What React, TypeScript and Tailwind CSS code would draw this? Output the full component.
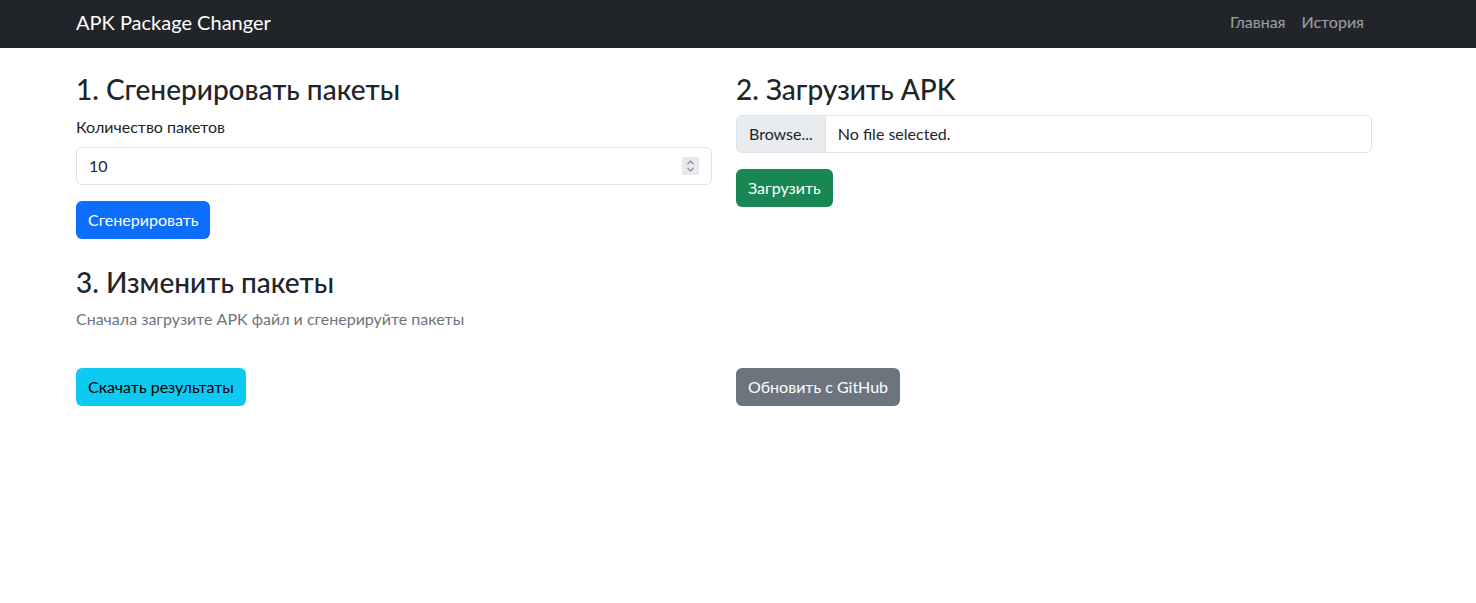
import React from 'react';

const fontStack = 'Lato, "Open Sans", sans-serif';

function NumberSpinner() {
  return (
    <span className="absolute right-[13px] top-1/2 -translate-y-1/2 w-[17px] h-[18px] bg-[#e9e9ed] flex flex-col items-center justify-center">
      <svg width="9" height="14" viewBox="0 0 9 14" fill="none" stroke="#8a8a8e" strokeWidth="1.2">
        <path d="M1.5 5 L4.5 2 L7.5 5" />
        <path d="M1.5 9 L4.5 12 L7.5 9" />
      </svg>
    </span>
  );
}

export default function App() {
  return (
    <div className="min-h-screen bg-white text-[#212529]" style={{ fontFamily: fontStack }}>
      {/* Navbar */}
      <nav className="bg-[#212529] h-12">
        <div className="w-[1320px] ml-[64px] px-3 pb-[4px] h-full flex items-center justify-between">
          <a className="text-white text-[20px] leading-[30px]">APK Package Changer</a>
          <div className="flex items-center text-[16px] leading-6">
            <a className="px-2 text-white/55">Главная</a>
            <a className="px-2 text-white/55">История</a>
          </div>
        </div>
      </nav>

      <main className="w-[1320px] ml-[64px] px-3 pt-[25px]">
        <div className="grid grid-cols-2 gap-x-6">
          {/* Generate */}
          <div>
            <h3 className="text-[28px] leading-[1.2] font-medium mb-2">1. Сгенерировать пакеты</h3>
            <label className="block text-[16px] leading-6 mb-2">Количество пакетов</label>
            <div className="relative mb-4">
              <input
                type="text"
                defaultValue="10"
                className="w-full h-[38px] border border-[#dee2e6] rounded-md px-3 text-[16px] leading-6 outline-none"
              />
              <NumberSpinner />
            </div>
            <button className="h-[38px] px-3 rounded-md bg-[#0d6efd] text-white text-[16px] leading-6">
              Сгенерировать
            </button>
          </div>

          {/* Upload */}
          <div>
            <h3 className="text-[28px] leading-[1.2] font-medium mb-2">2. Загрузить APK</h3>
            <div className="flex h-[38px] border border-[#dee2e6] rounded-md overflow-hidden mb-4 mt-[2px] text-[16px]">
              <span className="px-3 flex items-center bg-[#e9ecef] border-r border-[#dee2e6]">Browse...</span>
              <span className="px-3 flex items-center">No file selected.</span>
            </div>
            <button className="h-[38px] px-3 rounded-md bg-[#198754] text-white text-[16px] leading-6">
              Загрузить
            </button>
          </div>
        </div>

        {/* Modify */}
        <h3 className="text-[28px] leading-[1.2] font-medium mb-2 mt-[27px]">3. Изменить пакеты</h3>
        <p className="text-[16px] leading-6 text-[#6c757d]">Сначала загрузите APK файл и сгенерируйте пакеты</p>

        <div className="grid grid-cols-2 gap-x-6 mt-[37px]">
          <div>
            <button className="h-[38px] px-3 rounded-md bg-[#0dcaf0] text-black text-[16px] leading-6">
              Скачать результаты
            </button>
          </div>
          <div>
            <button className="h-[38px] px-3 rounded-md bg-[#6c757d] text-white text-[16px] leading-6">
              Обновить с GitHub
            </button>
          </div>
        </div>
      </main>
    </div>
  );
}
